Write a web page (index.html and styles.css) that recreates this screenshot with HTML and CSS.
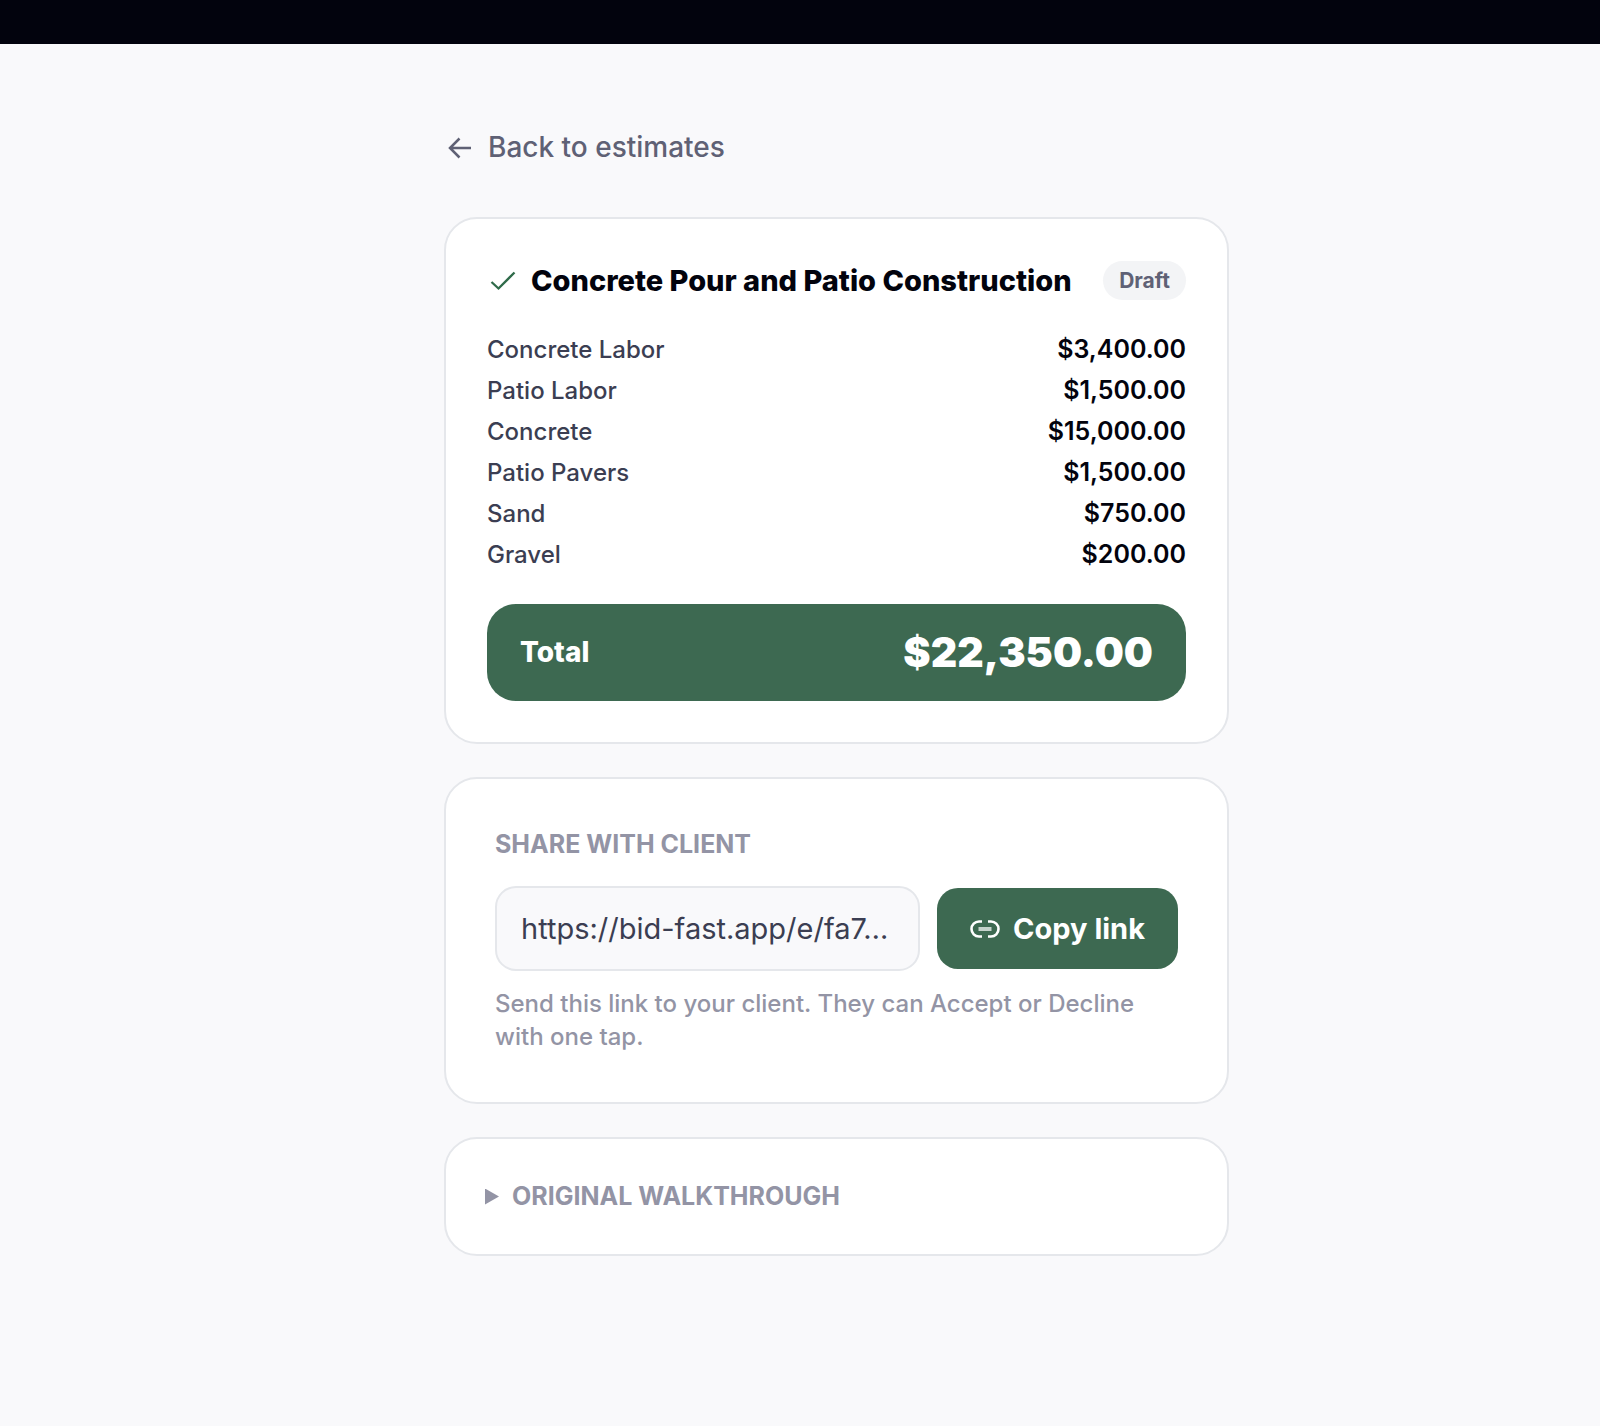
FILE: index.html
```html
<!DOCTYPE html>
<html lang="en">
<head>
<meta charset="utf-8">
<meta name="viewport" content="width=device-width, initial-scale=1">
<title>Concrete Pour and Patio Construction</title>
<link rel="stylesheet" href="styles.css">
</head>
<body>
<header class="topbar"></header>
<main class="page">
  <a class="back" href="#estimates">
    <svg class="back-icon" viewBox="0 0 24 22" aria-hidden="true"><path d="M23 11H2M11.500 1.500 2 11l9.500 9.500"/></svg>
    Back to estimates
  </a>

  <section class="card estimate">
    <div class="estimate-head">
      <svg class="check-icon" viewBox="0 0 26 20" aria-hidden="true"><path d="M1.500 11 8.500 17.500 24.500 1.500"/></svg>
      <h1 class="title">Concrete Pour and Patio Construction</h1>
      <span class="status">Draft</span>
    </div>
    <table class="items">
      <tbody>
        <tr><th scope="row">Concrete Labor</th><td>$3,400.00</td></tr>
        <tr><th scope="row">Patio Labor</th><td>$1,500.00</td></tr>
        <tr><th scope="row">Concrete</th><td>$15,000.00</td></tr>
        <tr><th scope="row">Patio Pavers</th><td>$1,500.00</td></tr>
        <tr><th scope="row">Sand</th><td>$750.00</td></tr>
        <tr><th scope="row">Gravel</th><td>$200.00</td></tr>
      </tbody>
    </table>
    <div class="total">
      <span class="total-label">Total</span>
      <strong class="total-amount">$22,350.00</strong>
    </div>
  </section>

  <section class="card share">
    <label class="eyebrow" for="share-link">SHARE WITH CLIENT</label>
    <div class="share-row">
      <input class="share-link" id="share-link" type="text" readonly value="https://bid-fast.app/e/fa7…">
      <button class="copy" type="button">
        <svg class="link-icon" viewBox="0 0 30 18" aria-hidden="true"><path d="M12 1.500H9a7.500 7.500 0 0 0 0 15h3M18 1.500h3a7.500 7.500 0 0 1 0 15h-3"/><path class="link-bar" d="M8.500 9h13"/></svg>
        Copy link
      </button>
    </div>
    <p class="hint">Send this link to your client. They can Accept or Decline with one tap.</p>
  </section>

  <details class="card walkthrough">
    <summary class="eyebrow">ORIGINAL WALKTHROUGH</summary>
  </details>
</main>
</body>
</html>
```

FILE: styles.css
```css
* {
  box-sizing: border-box;
}

body {
  margin: 0;
  background: #f9f9fb;
  color: #02030d;
  font-family: Inter, "Liberation Sans", sans-serif;
  font-size: 24px;
  line-height: 33px;
}

.topbar {
  height: 44px;
  background: #02030d;
}

.page {
  display: flex;
  flex-direction: column;
  gap: 33px;
  max-width: 858px;
  margin: 0 auto;
  padding: 83px 0 96px 73px;
}

.back {
  display: flex;
  align-items: center;
  gap: 16px;
  align-self: flex-start;
  margin-bottom: 16px;
  padding-left: 4px;
  color: #5f6175;
  font-size: 28px;
  font-weight: 500;
  line-height: 41px;
  text-decoration: none;
}

.back-icon {
  width: 24px;
  height: 22px;
  fill: none;
  stroke: currentColor;
  stroke-width: 2.500;
}

.card {
  background: #fff;
  border: 2px solid #e5e7eb;
  border-radius: 33px;
}

.estimate {
  padding: 41px;
}

.estimate-head {
  display: flex;
  align-items: center;
  height: 41px;
}

.check-icon {
  flex: none;
  width: 26px;
  height: 20px;
  margin: 0 15px 0 3px;
  fill: none;
  stroke: #2f6b4a;
  stroke-width: 2.300;
}

.title {
  flex: 1;
  margin: 0;
  font-size: 29px;
  font-weight: 800;
  line-height: 41px;
  white-space: nowrap;
}

.status {
  padding: 3px 16px;
  border-radius: 20px;
  background: #f3f4f6;
  color: #5f6175;
  font-size: 21px;
  font-weight: 700;
}

.items {
  width: 100%;
  margin: 28px 0 29px;
  border-collapse: collapse;
}

.items th,
.items td {
  height: 41px;
  padding: 0;
}

.items th {
  color: #3b3e52;
  font-weight: 500;
  text-align: left;
}

.items td {
  font-size: 25px;
  font-weight: 600;
  text-align: right;
}

.total {
  display: flex;
  align-items: center;
  justify-content: space-between;
  padding: 24px 33px;
  border-radius: 29px;
  background: #3d6951;
  color: #fff;
}

.total-label {
  font-size: 28px;
  font-weight: 800;
}

.total-amount {
  font-size: 41px;
  font-weight: 900;
  line-height: 49px;
}

.share {
  padding: 49px;
}

.eyebrow {
  display: block;
  color: #9394a5;
  font-size: 25px;
  font-weight: 700;
}

.share-row {
  display: flex;
  align-items: center;
  gap: 17px;
  margin: 25px 0 16px;
}

.share-link {
  flex: 1;
  min-width: 0;
  height: 85px;
  padding: 0 24px;
  border: 2px solid #e5e7eb;
  border-radius: 21px;
  background: #f9f9fb;
  color: #3b3e52;
  font: inherit;
  font-size: 29px;
}

.copy {
  display: flex;
  align-items: center;
  gap: 13px;
  height: 81px;
  padding: 0 33px;
  border: 0;
  border-radius: 21px;
  background: #3d6951;
  color: #fff;
  font: inherit;
  font-size: 29px;
  font-weight: 700;
}

.link-icon {
  width: 30px;
  height: 18px;
  fill: none;
  stroke: currentColor;
  stroke-width: 2.600;
}

.link-bar {
  stroke-width: 4;
  opacity: 0.7;
}

.hint {
  margin: 0;
  color: #9394a5;
  font-weight: 500;
}

.walkthrough {
  padding: 41px 39px;
}

.walkthrough summary {
  display: flex;
  align-items: center;
  gap: 13px;
  list-style: none;
}

.walkthrough summary::before {
  content: "";
  width: 14px;
  height: 16px;
  background: currentColor;
  clip-path: polygon(0 0, 100% 50%, 0 100%);
}
```
